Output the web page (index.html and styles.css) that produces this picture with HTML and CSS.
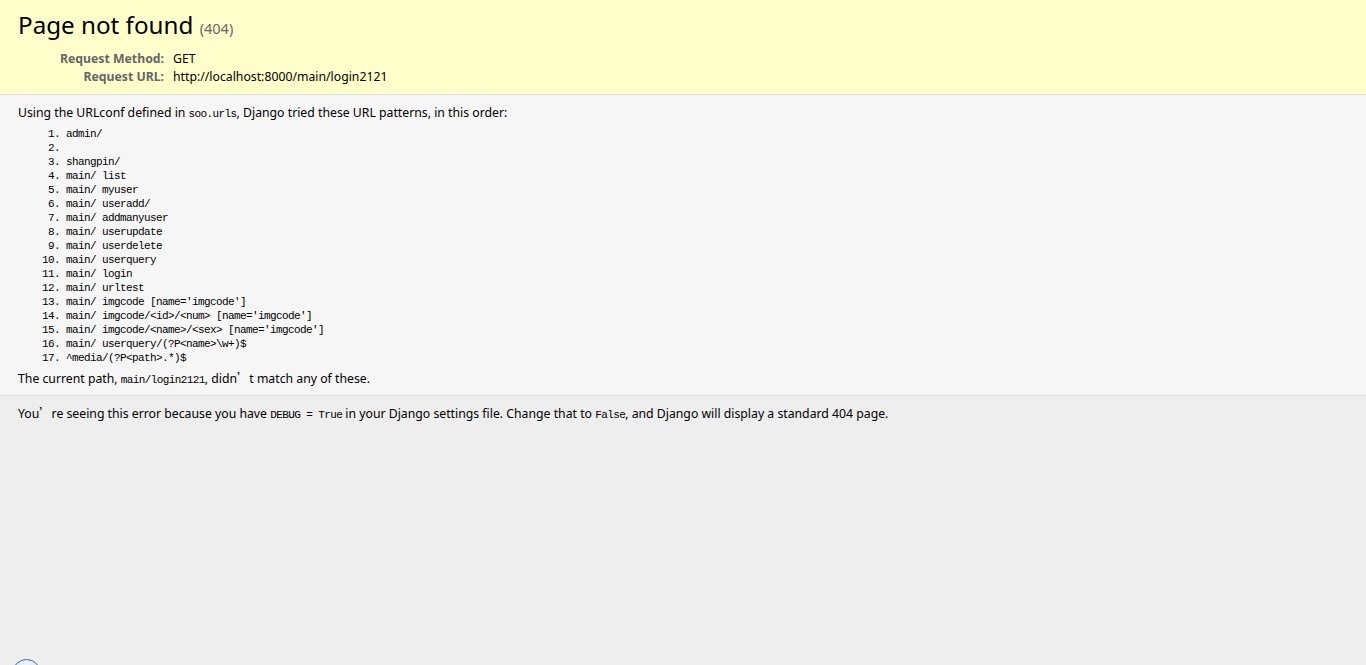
FILE: index.html
```html
<!DOCTYPE html>
<html lang="en">
<head>
<meta charset="utf-8">
<title>Page not found at /main/login2121</title>
<link rel="stylesheet" href="styles.css">
</head>
<body>
<div class="summary">
  <h1 class="title">Page not found <span class="code">(404)</span></h1>
  <table class="meta">
    <tr><th>Request Method:</th><td>GET</td></tr>
    <tr><th>Request URL:</th><td>http://localhost:8000/main/login2121</td></tr>
  </table>
</div>
<div class="info">
  <p class="line">Using the URLconf defined in <code class="mono">soo.urls</code>, Django tried these URL patterns, in this order:</p>
  <ol class="patterns">
    <li>admin/</li>
    <li>&nbsp;</li>
    <li>shangpin/</li>
    <li>main/ list</li>
    <li>main/ myuser</li>
    <li>main/ useradd/</li>
    <li>main/ addmanyuser</li>
    <li>main/ userupdate</li>
    <li>main/ userdelete</li>
    <li>main/ userquery</li>
    <li>main/ login</li>
    <li>main/ urltest</li>
    <li>main/ imgcode [name='imgcode']</li>
    <li>main/ imgcode/&lt;id&gt;/&lt;num&gt; [name='imgcode']</li>
    <li>main/ imgcode/&lt;name&gt;/&lt;sex&gt; [name='imgcode']</li>
    <li>main/ userquery/(?P&lt;name&gt;\w+)$</li>
    <li>^media/(?P&lt;path&gt;.*)$</li>
  </ol>
  <p class="line">The current path, <code class="mono">main/login2121</code>, didn<span class="q">’</span>t match any of these.</p>
</div>
<div class="explanation">
  <p class="line">You<span class="q">’</span>re seeing this error because you have <code class="mono">DEBUG = True</code> in your Django settings file. Change that to <code class="mono">False</code>, and Django will display a standard 404 page.</p>
</div>
<div class="floater"></div>
</body>
</html>
```
FILE: styles.css
```css
html, body { margin: 0; padding: 0; }
body {
  font-family: "Noto Sans", "Liberation Sans", sans-serif;
  font-size: 12.25px;
  line-height: 14px;
  background: #eee;
  color: #000;
  min-height: 665px;
  overflow: hidden;
}
.summary {
  background: #ffc;
  padding: 10px 18px 8px;
  border-bottom: 1px solid #ddd;
}
.title {
  margin: 0 0 7px 0;
  font-size: 24.2px;
  line-height: 30px;
  font-weight: normal;
}
.code { font-size: 60%; color: #666; }
.meta { border-collapse: collapse; width: 100%; }
.meta th, .meta td { vertical-align: top; padding: 2px 3px; line-height: 14px; }
.meta th {
  width: 143px;
  text-align: right;
  color: #666;
  padding-right: 6px;
  font-weight: bold;
}
.meta td { text-align: left; }
.info {
  background: #f6f6f6;
  padding: 11px 18px 8px;
  border-bottom: 1px solid #ddd;
}
.line { margin: 0; }
.patterns {
  margin: 5.5px 0 6.5px 48px;
  padding: 0;
}
.patterns li {
  font-family: "Liberation Mono", monospace;
  font-size: 11px;
  letter-spacing: -0.6px;
  line-height: 14px;
}
.mono { font-family: "Liberation Mono", monospace; font-size: 11px; letter-spacing: -0.6px; }
.q { font-family: "Noto Sans CJK SC", sans-serif; }
.explanation {
  background: #eee;
  padding: 10px 18px;
}
.floater {
  position: absolute;
  left: 12px;
  top: 659px;
  width: 29px;
  height: 29px;
  border-radius: 50%;
  border: 1px solid #3a6ea5;
  background: radial-gradient(circle at 50% 30%, #f4f8fc, #c9d9ea);
  box-sizing: border-box;
}
```
